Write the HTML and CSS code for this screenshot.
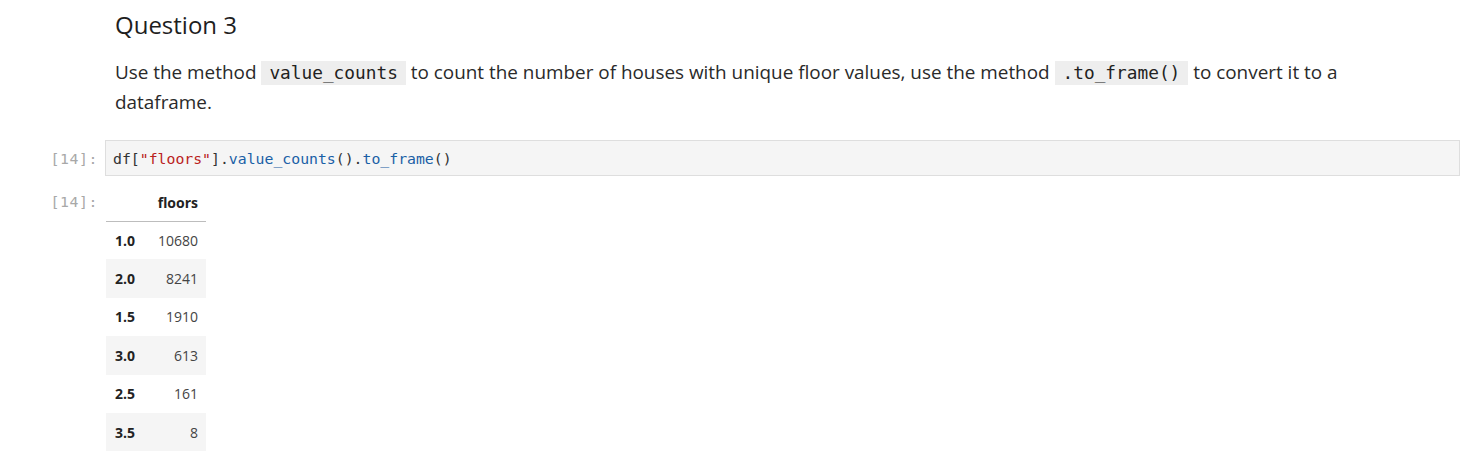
FILE: index.html
```html
<!DOCTYPE html>
<html>
<head>
<meta charset="utf-8">
<link rel="stylesheet" href="styles.css">
</head>
<body>
<div class="cell md-cell">
  <div class="prompt"></div>
  <div class="content md">
    <h2 class="heading">Question 3</h2>
    <p class="para"><span>Use the method </span><code class="chip">value_counts</code><span> to count the number of houses with unique floor values, use the method </span><code class="chip">.to_frame()</code><span> to convert it to a </span><span>dataframe.</span></p>
  </div>
</div>
<div class="cell code-cell">
  <div class="prompt in-prompt">[14]:</div>
  <div class="content">
    <div class="editor"><span class="tok-var">df</span><span class="tok-p">[</span><span class="tok-str">"floors"</span><span class="tok-p">].</span><span class="tok-prop">value_counts</span><span class="tok-p">().</span><span class="tok-prop">to_frame</span><span class="tok-p">()</span></div>
  </div>
</div>
<div class="cell out-cell">
  <div class="prompt out-prompt">[14]:</div>
  <div class="content">
    <table class="df">
      <thead>
        <tr><th class="corner"></th><th class="col">floors</th></tr>
      </thead>
      <tbody>
        <tr><th>1.0</th><td>10680</td></tr>
        <tr><th>2.0</th><td>8241</td></tr>
        <tr><th>1.5</th><td>1910</td></tr>
        <tr><th>3.0</th><td>613</td></tr>
        <tr><th>2.5</th><td>161</td></tr>
        <tr><th>3.5</th><td>8</td></tr>
      </tbody>
    </table>
  </div>
</div>
</body>
</html>
```

FILE: styles.css
```css
html, body {
  margin: 0;
  padding: 0;
  background: #ffffff;
}
body {
  font-family: "Open Sans", "Noto Sans", sans-serif;
  color: #212121;
  width: 1470px;
}
.cell {
  display: flex;
  align-items: flex-start;
}
.prompt {
  width: 105px;
  flex: none;
  box-sizing: border-box;
  padding-right: 7px;
  text-align: right;
  font-family: "DejaVu Sans Mono", monospace;
  font-size: 14.8px;
  letter-spacing: 0.6px;
  color: #a8a8a8;
}
.content {
  flex: 1;
  margin-right: 10px;
  min-width: 0;
}
.md {
  padding-left: 10px;
  padding-right: 100px;
}
.heading {
  margin: 0;
  padding-top: 8px;
  font-size: 24px;
  font-weight: 400;
  line-height: 34px;
  color: #1e1e1e;
}
.para {
  margin: 15px 0 0 0;
  font-size: 18.9px;
  line-height: 30px;
  color: #2a2a2a;
}
.chip {
  display: inline-block;
  font-family: "DejaVu Sans Mono", monospace;
  font-size: 17.8px;
  line-height: 24px;
  background: #eeeeee;
  padding: 0 8px;
  color: #222;
}
.code-cell {
  margin-top: 23px;
}
.in-prompt {
  padding-top: 10px;
  line-height: 17px;
}
.editor {
  background: #f5f5f5;
  border: 1px solid #dedede;
  height: 36px;
  box-sizing: border-box;
  padding: 9px 7px 0 7px;
  font-family: "DejaVu Sans Mono", monospace;
  font-size: 14.8px;
  line-height: 17px;
  color: #333;
  white-space: pre;
}
.tok-str { color: #ba2121; }
.tok-prop { color: #1a5fa6; }
.tok-p { color: #333; }
.tok-var { color: #333; }
.out-cell {
  margin-top: 14px;
}
.out-prompt {
  padding-top: 3px;
  line-height: 17px;
}
.df {
  border-collapse: collapse;
  font-size: 14px;
  color: #222;
  margin-left: 1px;
  width: 100px;
}
.df th, .df td {
  padding: 0 8px;
  text-align: right;
  height: 38.4px;
  box-sizing: border-box;
}
.df thead th {
  height: 31px;
  vertical-align: top;
  padding-top: 3px;
  font-weight: 700;
  border-bottom: 1px solid #bdbdbd;
}
.df thead th.corner {
  padding-left: 9px;
  padding-right: 0;
}
.df thead th.col {
  padding-left: 0;
}
.df tbody th {
  text-align: left;
  font-weight: 700;
  padding-left: 9px;
  padding-right: 0;
}
.df tbody td {
  color: #444;
  padding-left: 0;
}
.df tbody tr:nth-child(even) {
  background: #f5f5f5;
}
```
